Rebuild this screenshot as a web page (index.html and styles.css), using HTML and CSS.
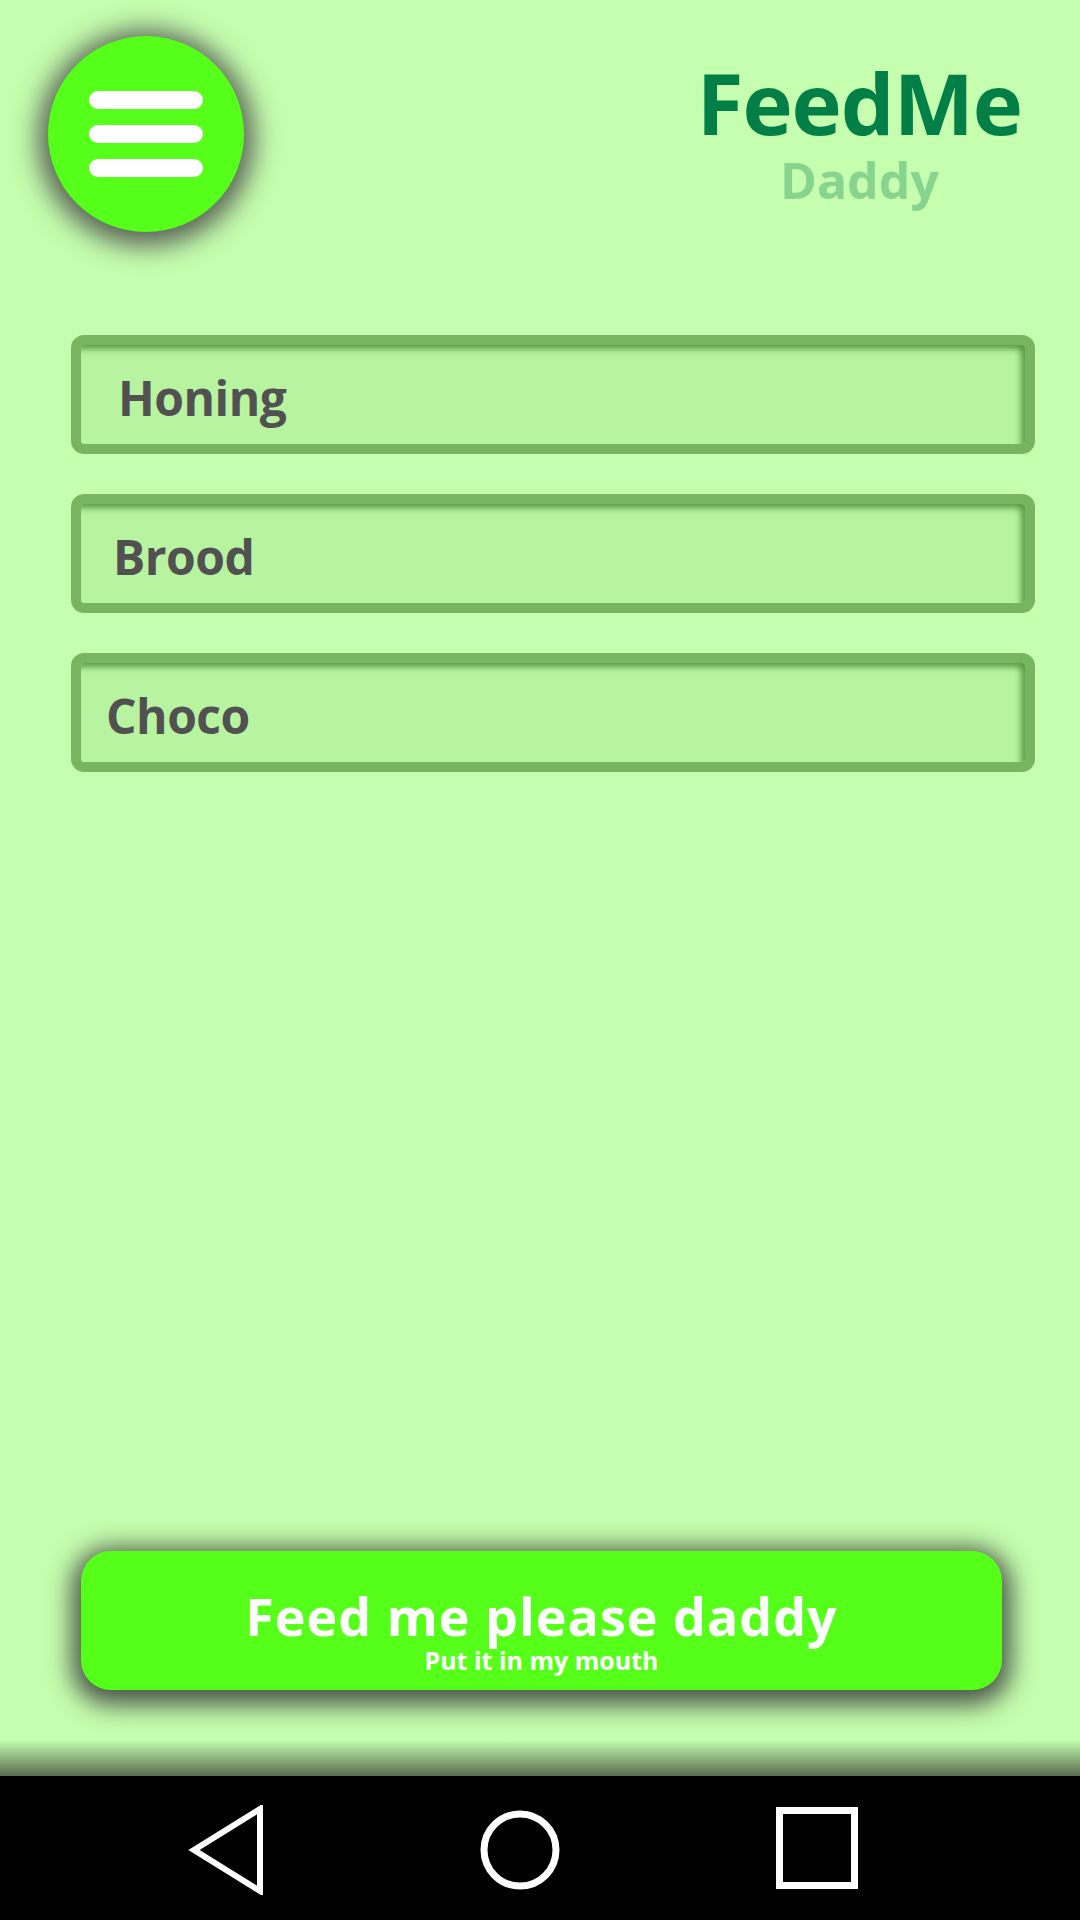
FILE: index.html
```html
<!DOCTYPE html>
<html>
<head>
<meta charset="utf-8">
<link rel="stylesheet" href="styles.css">
</head>
<body>
<div class="screen">
  <div class="main">
    <header class="header">
      <button class="menu-btn" aria-label="Menu">
        <span class="bar"></span>
        <span class="bar"></span>
        <span class="bar"></span>
      </button>
      <div class="brand">
        <div class="brand-title">FeedMe</div>
        <div class="brand-sub">Daddy</div>
      </div>
    </header>
    <div class="fields">
      <div class="field"><span class="field-text t1">Honing</span></div>
      <div class="field"><span class="field-text t2">Brood</span></div>
      <div class="field"><span class="field-text t3">Choco</span></div>
    </div>
    <div class="action">
      <button class="feed-btn">
        <span class="feed-main">Feed me please daddy</span>
        <span class="feed-sub">Put it in my mouth</span>
      </button>
    </div>
    <div class="shade"></div>
  </div>
  <nav class="navbar">
    <svg class="nav-icon" width="80" height="90" viewBox="0 0 80 90">
      <polygon points="72,4 72,86 6,45" fill="none" stroke="#fff" stroke-width="6" stroke-linejoin="miter"/>
    </svg>
    <svg class="nav-icon" width="80" height="80" viewBox="0 0 80 80">
      <circle cx="40" cy="40" r="36" fill="none" stroke="#fff" stroke-width="7"/>
    </svg>
    <svg class="nav-icon" width="82" height="82" viewBox="0 0 82 82">
      <rect x="3.5" y="3.5" width="75" height="75" fill="none" stroke="#fff" stroke-width="7"/>
    </svg>
  </nav>
</div>
</body>
</html>
```

FILE: styles.css
```css
* { box-sizing: border-box; }
html, body {
  margin: 0;
  padding: 0;
  width: 1080px;
  height: 1920px;
  overflow: hidden;
  background: #c5feae;
  font-family: "Comic Sans MS", "Open Sans", "DejaVu Sans", sans-serif;
}
.screen {
  display: flex;
  flex-direction: column;
  height: 1920px;
}
.main {
  flex: 1;
  display: flex;
  flex-direction: column;
}
.header {
  display: flex;
  justify-content: space-between;
  align-items: flex-start;
  padding: 36px 58px 0 48px;
}
.menu-btn {
  width: 196px;
  height: 196px;
  border-radius: 50%;
  border: none;
  background: #55ff1a;
  box-shadow: 0 4px 26px 10px rgba(70, 70, 70, 0.85);
  display: flex;
  flex-direction: column;
  align-items: center;
  justify-content: center;
  gap: 16px;
  padding: 0;
  margin: 0;
}
.bar {
  display: block;
  width: 114px;
  height: 18px;
  border-radius: 9px;
  background: #fff;
}
.brand {
  display: flex;
  flex-direction: column;
  align-items: center;
  margin-top: 16px;
}
.brand-title {
  font-size: 85px;
  font-weight: 700;
  color: #017f47;
  line-height: 100px;
  letter-spacing: -1px;
}
.brand-sub {
  font-size: 50px;
  font-weight: 700;
  color: #87d48e;
  line-height: 56px;
}
.fields {
  display: flex;
  flex-direction: column;
  gap: 40px;
  padding: 0 45px 0 71px;
  margin-top: 103px;
}
.field {
  height: 119px;
  border: 10px solid #77b560;
  border-radius: 13px;
  background: #b8f3a0;
  box-shadow: inset -6px 6px 6px -2px #5c9a45;
  display: flex;
  align-items: center;
}
.field-text {
  font-size: 48px;
  font-weight: 700;
  color: #515151;
  letter-spacing: -0.5px;
  padding-top: 6px;
}
.t1 { padding-left: 37px; }
.t2 { padding-left: 32px; }
.t3 { padding-left: 25px; }
.action {
  margin-top: auto;
  padding: 0 78px 50px 81px;
}
.feed-btn {
  width: 100%;
  height: 139px;
  border: none;
  border-radius: 30px;
  background: #55ff1a;
  box-shadow: 0 6px 24px 9px rgba(55, 55, 55, 0.85);
  display: flex;
  flex-direction: column;
  align-items: center;
  justify-content: center;
  color: #fff;
  font-family: inherit;
  padding: 20px 0 0 0;
}
.feed-main {
  font-size: 52px;
  font-weight: 700;
  line-height: 62px;
  letter-spacing: 1px;
}
.feed-sub {
  font-size: 25px;
  font-weight: 700;
  line-height: 34px;
  margin-top: -4px;
}
.shade {
  height: 36px;
  background: linear-gradient(to bottom, rgba(60, 60, 60, 0), rgba(60, 70, 55, 0.8));
}
.navbar {
  height: 144px;
  background: #000;
  position: relative;
}
.nav-icon { display: block; position: absolute; }
.nav-icon:nth-child(1) { left: 188px; top: 29px; }
.nav-icon:nth-child(2) { left: 480px; top: 34px; }
.nav-icon:nth-child(3) { left: 776px; top: 31px; }
```
